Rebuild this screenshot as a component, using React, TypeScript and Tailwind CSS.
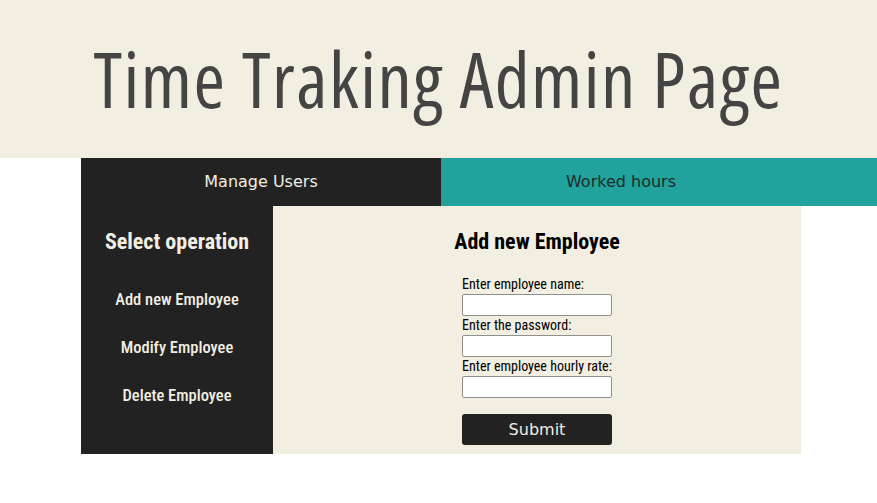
const inputCls = "h-[22px] bg-white border border-[#8f8f8f] rounded-[2px] px-1 text-[13px]";

export default function App() {
  return (
    <div className="w-[877px] h-[503px] bg-white font-['Roboto_Condensed',sans-serif]">
      <header className="h-[158px] bg-[#f2eee1] flex items-center justify-center">
        <h1 className="font-['Open_Sans',sans-serif] font-stretch-condensed text-[76px] text-[#444444] leading-none tracking-[1.5px]">
          Time Traking Admin Page
        </h1>
      </header>

      <nav className="ml-[81px] flex h-[48px] bg-[#21a29d] text-[16px] font-['DejaVu_Sans',Verdana,sans-serif]">
        <div className="w-[360px] bg-[#222222] text-[#f2eee1] flex items-center justify-center">
          Manage Users
        </div>
        <div className="w-[360px] text-[#1f2a28] flex items-center justify-center">
          Worked hours
        </div>
      </nav>

      <main className="ml-[81px] flex h-[248px] w-[720px]">
        <aside className="w-[192px] bg-[#222222] text-[#f2eee1] flex flex-col items-center pt-[23px]">
          <h2 className="text-[22px] font-bold leading-[26px]">Select operation</h2>
          <ul className="mt-[33px] flex flex-col items-center gap-[24px] text-[16.5px] leading-[24px] font-medium">
            <li>Add new Employee</li>
            <li>Modify Employee</li>
            <li>Delete Employee</li>
          </ul>
        </aside>

        <section className="flex-1 bg-[#f2eee1] flex flex-col items-center pt-[23px]">
          <h2 className="text-[22px] font-bold leading-[26px] text-black">Add new Employee</h2>
          <form className="mt-[20px] w-[150px] flex flex-col text-[14px] text-black">
            <label className="leading-[19px]">Enter employee name:</label>
            <input className={inputCls} />
            <label className="leading-[19px]">Enter the password:</label>
            <input type="password" className={inputCls} />
            <label className="leading-[19px] whitespace-nowrap">Enter employee hourly rate:</label>
            <input className={inputCls} />
            <button
              type="button"
              className="mt-[16px] h-[31px] bg-[#222222] text-[#f2eee1] rounded-[3px] text-[16px] font-['DejaVu_Sans',Verdana,sans-serif]"
            >
              Submit
            </button>
          </form>
        </section>
      </main>
    </div>
  );
}
